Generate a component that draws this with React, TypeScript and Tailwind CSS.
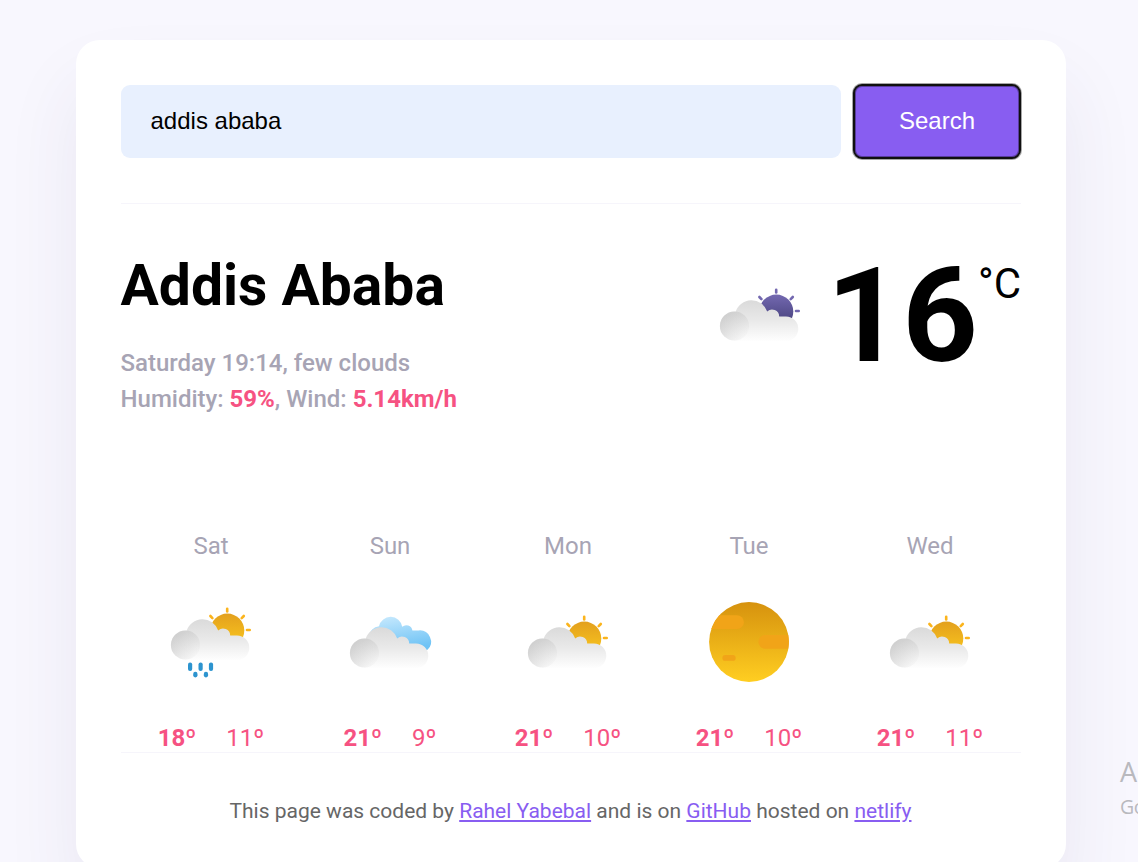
import { useId } from "react";

type Kind = "rain" | "broken" | "few" | "few-night" | "clear";

function SunWithRays({ fill, ray }: { fill: string; ray: string }) {
  return (
    <g>
      <circle cx="56.3" cy="36.6" r="17" fill={fill} />
      <g stroke={ray} strokeWidth="2.6" strokeLinecap="round">
        <path d="M56.2 14.8v2.6" />
        <path d="M39.4 22l2 2.1" />
        <path d="M72.8 22l-2.1 2.1" />
        <path d="M76 36h2.7" />
      </g>
    </g>
  );
}

function WeatherIcon({ kind }: { kind: Kind }) {
  const id = useId().replace(/[^a-zA-Z0-9]/g, "");
  const night = kind === "few-night";
  return (
    <svg viewBox="0 0 80 80" className="block size-20 shrink-0 overflow-visible">
      <defs>
        <linearGradient id={`s${id}`} x1="0" y1="0" x2="0" y2="1">
          <stop offset="0" stopColor={night ? "#7368b0" : "#e3a01d"} />
          <stop offset="1" stopColor={night ? "#3f3b73" : "#fbc91f"} />
        </linearGradient>
        <linearGradient id={`t${id}`} x1="0" y1="0" x2="0" y2="1">
          <stop offset="0" stopColor="#d6920e" />
          <stop offset="1" stopColor="#ffce21" />
        </linearGradient>
        <linearGradient id={`c${id}`} gradientUnits="userSpaceOnUse" x1="40" y1="24" x2="40" y2="67">
          <stop offset="0" stopColor="#d9d9d9" />
          <stop offset="0.5" stopColor="#e9e9e9" />
          <stop offset="1" stopColor="#ffffff" />
        </linearGradient>
        <linearGradient id={`l${id}`} x1="0.35" y1="0.1" x2="0.6" y2="1">
          <stop offset="0" stopColor="#d0d0d0" />
          <stop offset="1" stopColor="#fafafa" />
        </linearGradient>
        <linearGradient id={`e${id}`} x1="0" y1="0" x2="1" y2="0">
          <stop offset="0" stopColor="#c8c8c8" />
          <stop offset="0.65" stopColor="#dedede" stopOpacity="0.5" />
          <stop offset="1" stopColor="#e6e6e6" stopOpacity="0" />
        </linearGradient>
        <linearGradient id={`b${id}`} gradientUnits="userSpaceOnUse" x1="40" y1="15" x2="46" y2="49">
          <stop offset="0" stopColor="#c2e7fd" />
          <stop offset="1" stopColor="#6fc3f5" />
        </linearGradient>
      </defs>
      {kind === "clear" ? (
        <g>
          <circle cx="40" cy="40" r="39.9" fill={`url(#t${id})`} />
          <g fill="#f1a418">
            <path d="M10.2 13.3H28a6.9 6.9 0 0 1 0 13.8H2.3A40 40 0 0 1 10.2 13.3Z" />
            <path d="M56.2 33H79.3A40 40 0 0 1 79.3 46.7H56.2a6.85 6.85 0 0 1 0-13.7Z" />
            <rect x="13.4" y="53" width="13.3" height="5.8" rx="2.9" />
          </g>
        </g>
      ) : (
        <g transform={kind === "rain" ? "translate(0 -8)" : undefined}>
          {kind === "broken" ? (
            <path
              d="M25.5 47A12 12 0 0 1 29 24.2A11.8 11.8 0 0 1 52.2 24.8A6.2 6.2 0 0 1 62.4 28.4L68.6 28.4A11.3 11.3 0 0 1 77.5 47.8L74 48.5Z"
              fill={`url(#b${id})`}
            />
          ) : (
            <SunWithRays fill={`url(#s${id})`} ray={night ? "#7368b0" : "#fbb41c"} />
          )}
          <path
            d="M14.5 66A14.5 14.5 0 0 1 15.5 37.2A16.6 16.6 0 0 1 47.2 36.6A7 7 0 0 1 59.2 41.4L66 41.4A12.3 12.3 0 0 1 66 66Z"
            fill={`url(#c${id})`}
          />
          <circle cx="14.5" cy="51" r="14.6" fill={`url(#l${id})`} />
          <circle cx="14.5" cy="51" r="14.6" fill={`url(#e${id})`} opacity="0.35" />
        </g>
      )}
      {kind === "rain" && (
        <g fill="#2d94cf">
          <rect x="17" y="60.6" width="4.2" height="8.3" rx="2" />
          <rect x="27.5" y="60.6" width="4.2" height="8.3" rx="2" />
          <rect x="37.9" y="60.6" width="4.2" height="8.3" rx="2" />
          <rect x="22.2" y="69.8" width="4.3" height="5.6" rx="2.1" />
          <rect x="32.8" y="69.8" width="4.3" height="5.6" rx="2.1" />
        </g>
      )}
    </svg>
  );
}

const forecast: { day: string; kind: Kind; high: number; low: number }[] = [
  { day: "Sat", kind: "rain", high: 18, low: 11 },
  { day: "Sun", kind: "broken", high: 21, low: 9 },
  { day: "Mon", kind: "few", high: 21, low: 10 },
  { day: "Tue", kind: "clear", high: 21, low: 10 },
  { day: "Wed", kind: "few", high: 21, low: 11 },
];

export default function App() {
  return (
    <div className="relative h-[862px] w-full overflow-hidden bg-[#f8f7fe] pt-10 font-['Roboto',sans-serif] text-black">
      <main className="ml-[76px] h-[828px] w-[990px] rounded-3xl bg-white p-[45px] shadow-[0_45px_75px_rgba(65,50,100,0.08)]">
        <header className="flex h-[119px] items-start justify-between border-b border-[#f6f5fb]">
          <input
            className="h-[73px] w-[720px] rounded-[9px] bg-[#e8f0fe] px-[29.5px] pb-0.5 font-['Liberation_Sans',sans-serif] text-2xl text-black outline-none"
            defaultValue="addis ababa"
          />
          <button className="-mt-px h-[75px] w-[168px] rounded-[9px] border-2 border-[#101010] bg-[#885df1] pb-0.5 font-['Liberation_Sans',sans-serif] text-2xl text-white shadow-[0_0_0_1px_rgba(0,0,0,0.35),inset_0_0_0_1px_rgba(0,0,0,0.35)]">
            Search
          </button>
        </header>

        <section className="flex h-[320px] justify-between pt-[46px]">
          <div className="-ml-[0.5px]">
            <h1 className="text-[57px] leading-[72px] font-bold">Addis Ababa</h1>
            <p className="pt-[23px] text-2xl leading-9 font-medium text-[#a7a4b4]">
              Saturday 19:14, few clouds
              <br />
              Humidity: <strong className="font-bold text-[#f65282]">59%</strong>, Wind:{" "}
              <strong className="font-bold text-[#f65282]">5.14km/h</strong>
            </p>
          </div>
          <div className="flex items-start">
            <div className="mr-[27px] pt-[25px]">
              <WeatherIcon kind="few-night" />
            </div>
            <div className="text-[132px] leading-[132px] font-bold">16</div>
            <div className="pt-[10px] text-[42px] leading-[48px]">°C</div>
          </div>
        </section>

        <section className="grid h-[229px] grid-cols-[180px_178px_178px_184px_178px] border-b border-[#f6f5fb]">
          {forecast.map(({ day, kind, high, low }) => (
            <div key={day} className="flex flex-col items-center">
              <div className="pt-1 text-2xl leading-9 text-[#a7a4b4]">{day}</div>
              <div className="pt-[38px]">
                <WeatherIcon kind={kind} />
              </div>
              <div className="flex pt-[38px] text-2xl leading-9 text-[#f65282]">
                <span className="px-[15px] font-bold">{high}º</span>
                <span className="px-[15px]">{low}º</span>
              </div>
            </div>
          ))}
        </section>

        <footer className="-ml-px pt-11 text-center text-[21px] leading-7 text-[#666666]">
          This page was coded by <a className="text-[#885df1] underline">Rahel Yabebal</a> and is on{" "}
          <a className="text-[#885df1] underline">GitHub</a> hosted on{" "}
          <a className="text-[#885df1] underline">netlify</a>
        </footer>
      </main>

      <aside className="absolute top-[754px] left-[1120px] w-[30px] font-['Open_Sans',sans-serif] text-[#b9b9be]">
        <div className="text-[27px] leading-9">A</div>
        <div className="text-[19.5px] leading-[33px] tracking-tight">Go</div>
      </aside>
    </div>
  );
}
